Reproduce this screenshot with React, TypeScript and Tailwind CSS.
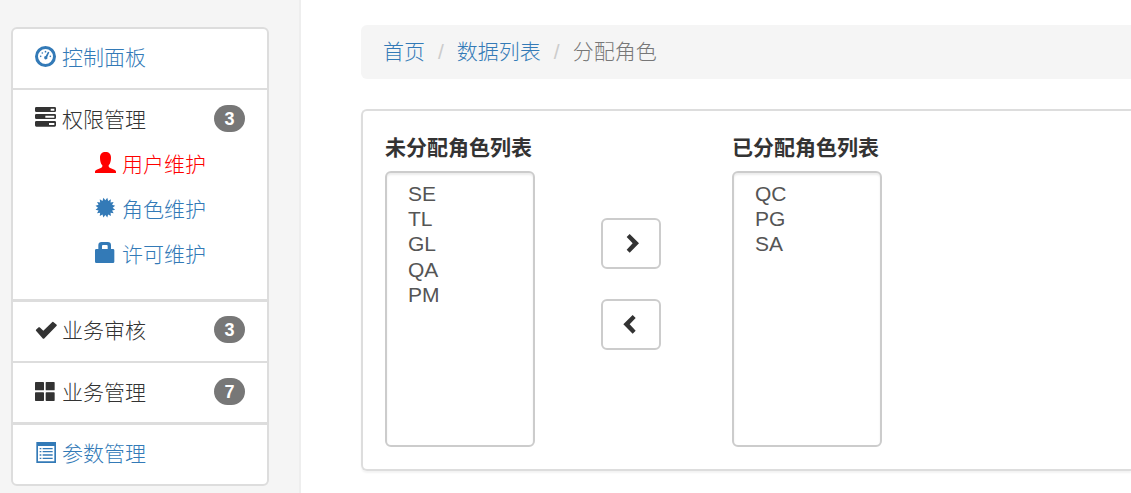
import type { ReactNode } from "react";

function Glyph({ children }: { children: ReactNode }) {
  return (
    <svg
      viewBox="0 0 63 63"
      className="mb-1 size-[21px] shrink-0 overflow-visible"
      fill="currentColor"
      aria-hidden="true"
    >
      {children}
    </svg>
  );
}

const DashboardIcon = () => (
  <Glyph>
    <g transform="translate(0 3)">
      <circle cx="31.5" cy="31.5" r="27" fill="none" stroke="currentColor" strokeWidth="9" />
      <circle cx="17" cy="31" r="2.5" />
      <circle cx="22" cy="21" r="2.5" />
      <circle cx="31.5" cy="17" r="2.5" />
      <circle cx="46" cy="31" r="2.5" />
      <path d="M39 17l4 2-6 14a5 5 0 1 1-5-3z" />
    </g>
  </Glyph>
);

const TasksIcon = () => (
  <Glyph>
    <path
      fillRule="evenodd"
      d="M4 0h55q4 0 4 4v7q0 4-4 4H4q-4 0-4-4V4q0-4 4-4zM47 5v6h11V5zM4 21h55q4 0 4 4v7q0 4-4 4H4q-4 0-4-4v-7q0-4 4-4zM31 26v6h27v-6zM4 42h55q4 0 4 4v9q0 4-4 4H4q-4 0-4-4v-9q0-4 4-4zM42 48v6h16v-6z"
    />
  </Glyph>
);

const UserIcon = () => (
  <Glyph>
    <path d="M31.5 0C42 0 48 6 48 17c0 9-2 18-7 23v3c0 2 1 3 3 4l14 6c4 2 5 4 5 6v4H0v-4c0-2 1-4 5-6l14-6c2-1 3-2 3-4v-3c-5-5-7-14-7-23C15 6 21 0 31.5 0z" />
  </Glyph>
);

const starPoints = Array.from({ length: 32 }, (_, i) => {
  const r = i % 2 === 0 ? 30 : 22;
  const a = (i * Math.PI) / 16 + Math.PI / 16;
  return `${(31 + r * Math.cos(a)).toFixed(1)},${(32 + r * Math.sin(a)).toFixed(1)}`;
}).join(" ");

const CertificateIcon = () => (
  <Glyph>
    <polygon points={starPoints} />
  </Glyph>
);

const LockIcon = () => (
  <Glyph>
    <path
      fillRule="evenodd"
      d="M20 0h18q10 0 10 10v11h6q4 0 4 4v34q0 4-4 4H4q-4 0-4-4V25q0-4 4-4h6V10Q10 0 20 0zM24 9q-3 0-3 3v9h17v-9q0-3-3-3z"
    />
  </Glyph>
);

const OkIcon = () => (
  <Glyph>
    <path
      transform="translate(0 3)"
      d="M3 32l8-7q2-1 3 0l11 10L52 9q2-1 3 0l10 8q1 2 0 3L27 59q-2 1-3 0L3 35q-1-2 0-3z"
    />
  </Glyph>
);

const ThLargeIcon = () => (
  <Glyph>
    <rect x="0" y="6" width="27" height="25" rx="2" />
    <rect x="32" y="6" width="27" height="25" rx="2" />
    <rect x="0" y="37" width="27" height="26" rx="2" />
    <rect x="32" y="37" width="27" height="26" rx="2" />
  </Glyph>
);

const ListAltIcon = () => (
  <Glyph>
    <path
      transform="translate(0 3)"
      fillRule="evenodd"
      d="M4 0h59v63H4zM9 12v46h49V12zM14 18h5v4h-5zM23 18h30v4H23zM14 27h5v4h-5zM23 27h30v4H23zM14 37h5v4h-5zM23 37h30v4H23zM14 47h5v4h-5zM23 47h30v4H23z"
    />
  </Glyph>
);

const ChevronRightIcon = () => (
  <Glyph>
    <path d="M26 3l28 28-28 28-9-9 18-19-18-19z" />
  </Glyph>
);

const ChevronLeftIcon = () => (
  <Glyph>
    <path d="M35 3L7 31l28 28 9-9-18-19 18-19z" />
  </Glyph>
);

function Entry({ icon, label, badge }: { icon: ReactNode; label: string; badge?: number }) {
  return (
    <span className="flex items-center gap-[6px] leading-[29px]">
      {icon}
      <span>{label}</span>
      {badge !== undefined && (
        <span className="mb-[2px] ml-auto flex h-[27px] min-w-[31px] items-center justify-center rounded-full bg-[#777] text-[18px] leading-none font-bold text-white">
          {badge}
        </span>
      )}
    </span>
  );
}

function NavLink({ icon, label, className }: { icon: ReactNode; label: string; className: string }) {
  return (
    <a href="#" className={className}>
      <Entry icon={icon} label={label} />
    </a>
  );
}

function RoleList({ id, label, roles }: { id: string; label: string; roles: string[] }) {
  return (
    <div className="flex w-[150px] flex-col gap-2">
      <label htmlFor={id} className="leading-[30px] font-bold">
        {label}
      </label>
      <select
        id={id}
        multiple
        className="h-[276px] w-full overflow-hidden rounded-[6px] border-2 border-[#ccc] bg-white px-[18px] py-[9px] text-[#555] shadow-[inset_0_2px_2px_rgba(0,0,0,0.075)]"
      >
        {roles.map((role) => (
          <option key={role} className="px-[3px] py-0 leading-[25px]">
            {role}
          </option>
        ))}
      </select>
    </div>
  );
}

const buttonClass =
  "flex h-[51px] w-[60px] items-center justify-center rounded-[6px] border-2 border-[#ccc] bg-white pt-1";

export default function App() {
  return (
    <div className="flex min-h-screen bg-white font-['Liberation_Sans','Noto_Sans_CJK_SC',sans-serif] text-[21px] font-light text-[#333]">
      <aside className="w-[301px] shrink-0 border-r-2 border-[#eee] bg-[#f5f5f5] pt-[27px] pr-[30px] pl-[11px]">
        <ul className="rounded-[6px] border-2 border-[#ddd] bg-white">
          <li className="px-[22px] pt-[14px] pb-4">
            <NavLink icon={<DashboardIcon />} label="控制面板" className="block text-[#337ab7]" />
          </li>
          <li className="border-t-2 border-[#ddd] px-[22px] pt-[15px] pb-[22px]">
            <Entry icon={<TasksIcon />} label="权限管理" badge={3} />
            <ul className="pt-2 pl-[60px]">
              <li className="py-2">
                <NavLink icon={<UserIcon />} label="用户维护" className="block text-[#f00]" />
              </li>
              <li className="py-2">
                <NavLink icon={<CertificateIcon />} label="角色维护" className="block text-[#337ab7]" />
              </li>
              <li className="py-2">
                <NavLink icon={<LockIcon />} label="许可维护" className="block text-[#337ab7]" />
              </li>
            </ul>
          </li>
          <li className="border-t-[3px] border-[#ddd] px-[22px] pt-[14px] pb-4">
            <Entry icon={<OkIcon />} label="业务审核" badge={3} />
          </li>
          <li className="border-t-2 border-[#ddd] px-[22px] py-[15px]">
            <Entry icon={<ThLargeIcon />} label="业务管理" badge={7} />
          </li>
          <li className="border-t-[3px] border-[#ddd] px-[22px] pt-[14px] pb-4">
            <NavLink icon={<ListAltIcon />} label="参数管理" className="block text-[#337ab7]" />
          </li>
        </ul>
      </aside>

      <main className="min-w-0 flex-1 pt-[25px] pl-[60px]">
        <nav aria-label="breadcrumb" className="rounded-l-[6px] bg-[#f5f5f5] px-[22px] py-3">
          <ol className="flex gap-[13px] leading-[30px]">
            <li>
              <a href="#" className="text-[#337ab7]">首页</a>
            </li>
            <li className="flex gap-[13px]">
              <span className="text-[#ccc]">/</span>
              <a href="#" className="text-[#337ab7]">数据列表</a>
            </li>
            <li className="flex gap-[13px] text-[#777]">
              <span className="text-[#ccc]">/</span>
              <span>分配角色</span>
            </li>
          </ol>
        </nav>

        <section className="mt-[30px] flex rounded-l-[6px] border-2 border-r-0 border-[#ddd] p-[22px] shadow-[0_2px_2px_rgba(0,0,0,0.05)]">
          <RoleList id="unassigned" label="未分配角色列表" roles={["SE", "TL", "GL", "QA", "PM"]} />
          <div className="mr-[71px] ml-[66px] flex flex-col gap-[30px] pt-[85px]">
            <button type="button" aria-label="分配" className={buttonClass}>
              <ChevronRightIcon />
            </button>
            <button type="button" aria-label="取消分配" className={buttonClass}>
              <ChevronLeftIcon />
            </button>
          </div>
          <RoleList id="assigned" label="已分配角色列表" roles={["QC", "PG", "SA"]} />
        </section>
      </main>
    </div>
  );
}
